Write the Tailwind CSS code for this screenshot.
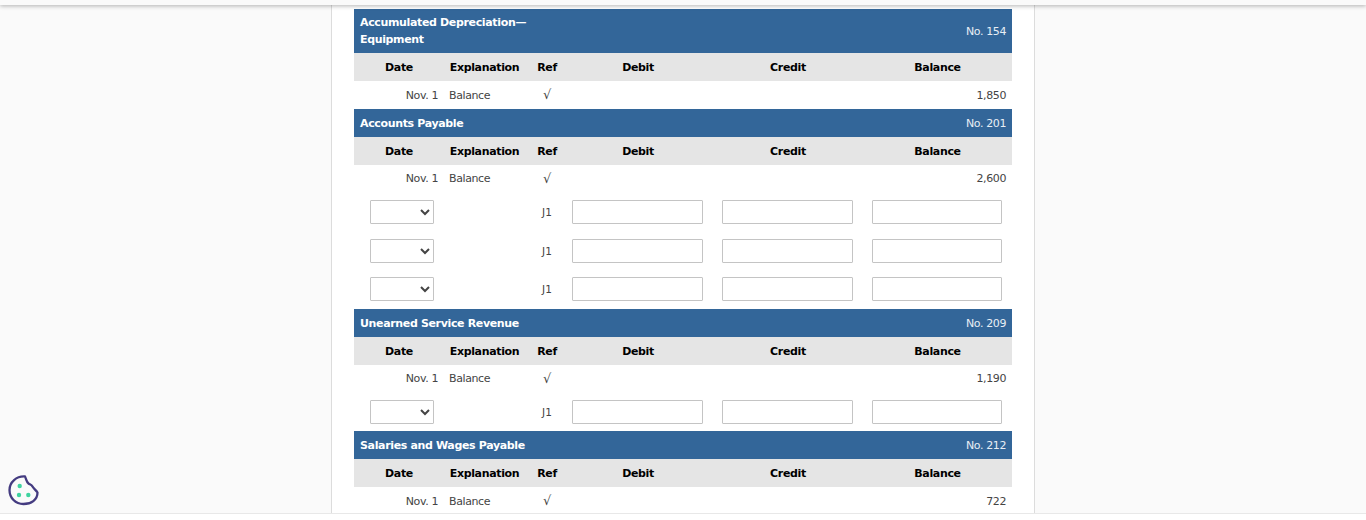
<!DOCTYPE html>
<html lang="en">
<head>
    <meta charset="UTF-8">
    <title>Ledger</title>
    <script src="https://cdn.jsdelivr.net/npm/@tailwindcss/browser@4"></script>
</head>
<body class="bg-white h-[520px] overflow-hidden font-['DejaVu_Sans',sans-serif] text-[11px] tracking-[-0.4px] text-[#444]">
    <!-- top bar -->
    <div class="relative z-10 h-[5px] bg-[#fafafa] shadow-[0_1px_4px_rgba(0,0,0,0.3)]"></div>

    <div class="h-[509px] bg-[#fafafa] border-b border-[#e8e8e8] overflow-hidden">
        <div class="w-[704px] h-full ml-[331px] bg-white border-x border-[#dcdcdc] pt-[4px] pl-[22px] overflow-hidden">
            <div class="w-[658px]">

                <!-- 154 -->
                <div class="h-[44px] px-[6px] flex items-center justify-between bg-[#336699] text-white">
                    <span class="font-bold tracking-[-0.35px] leading-[17px] w-[190px]">Accumulated Depreciation—Equipment</span>
                    <span class="mt-[3px] text-[#e8eef5]">No. 154</span>
                </div>
                <div class="grid grid-cols-[90px_87px_32px_150px_150px_149px] h-[28px] pt-[2px] items-center bg-[#e5e5e5] text-black font-bold tracking-[-0.35px] text-center">
                    <span>Date</span><span class="pr-[6px]">Explanation</span><span>Ref</span><span>Debit</span><span>Credit</span><span>Balance</span>
                </div>
                <div class="grid grid-cols-[90px_87px_32px_150px_150px_149px] h-[28px] pt-[2px] items-center">
                    <span class="text-right pr-[6px]">Nov. 1</span><span class="pl-[5px]">Balance</span><span class="mb-[2px] text-center text-[13px]">√</span><span></span><span></span><span class="text-right pr-[6px]">1,850</span>
                </div>

                <!-- 201 -->
                <div class="h-[28px] pt-[2px] px-[6px] flex items-center justify-between bg-[#336699] text-white">
                    <span class="font-bold tracking-[-0.35px]">Accounts Payable</span>
                    <span class="text-[#e8eef5]">No. 201</span>
                </div>
                <div class="grid grid-cols-[90px_87px_32px_150px_150px_149px] h-[28px] pt-[2px] items-center bg-[#e5e5e5] text-black font-bold tracking-[-0.35px] text-center">
                    <span>Date</span><span class="pr-[6px]">Explanation</span><span>Ref</span><span>Debit</span><span>Credit</span><span>Balance</span>
                </div>
                <div class="grid grid-cols-[90px_87px_32px_150px_150px_149px] h-[27px] pt-[2px] items-center">
                    <span class="text-right pr-[6px]">Nov. 1</span><span class="pl-[5px]">Balance</span><span class="mb-[2px] text-center text-[13px]">√</span><span></span><span></span><span class="text-right pr-[6px]">2,600</span>
                </div>
                <div class="grid grid-cols-[90px_87px_32px_150px_150px_149px] h-[40px] pt-[8px] items-start">
                    <select class="ml-[16px] w-[64px] h-[24px] bg-white border border-[#c4c4c4] rounded-[1px]"></select><span></span><span class="text-center text-[10.5px] tracking-normal leading-[24px]">J1</span>
                    <input type="text" class="ml-[9px] w-[131px] h-[24px] border border-[#c4c4c4] rounded-[1px]">
                    <input type="text" class="ml-[9px] w-[131px] h-[24px] border border-[#c4c4c4] rounded-[1px]">
                    <input type="text" class="ml-[9px] w-[130px] h-[24px] border border-[#c4c4c4] rounded-[1px]">
                </div>
                <div class="grid grid-cols-[90px_87px_32px_150px_150px_149px] h-[38px] pt-[7px] items-start">
                    <select class="ml-[16px] w-[64px] h-[24px] bg-white border border-[#c4c4c4] rounded-[1px]"></select><span></span><span class="text-center text-[10.5px] tracking-normal leading-[24px]">J1</span>
                    <input type="text" class="ml-[9px] w-[131px] h-[24px] border border-[#c4c4c4] rounded-[1px]">
                    <input type="text" class="ml-[9px] w-[131px] h-[24px] border border-[#c4c4c4] rounded-[1px]">
                    <input type="text" class="ml-[9px] w-[130px] h-[24px] border border-[#c4c4c4] rounded-[1px]">
                </div>
                <div class="grid grid-cols-[90px_87px_32px_150px_150px_149px] h-[39px] pt-[7px] items-start">
                    <select class="ml-[16px] w-[64px] h-[24px] bg-white border border-[#c4c4c4] rounded-[1px]"></select><span></span><span class="text-center text-[10.5px] tracking-normal leading-[24px]">J1</span>
                    <input type="text" class="ml-[9px] w-[131px] h-[24px] border border-[#c4c4c4] rounded-[1px]">
                    <input type="text" class="ml-[9px] w-[131px] h-[24px] border border-[#c4c4c4] rounded-[1px]">
                    <input type="text" class="ml-[9px] w-[130px] h-[24px] border border-[#c4c4c4] rounded-[1px]">
                </div>

                <!-- 209 -->
                <div class="h-[28px] pt-[2px] px-[6px] flex items-center justify-between bg-[#336699] text-white">
                    <span class="font-bold tracking-[-0.35px]">Unearned Service Revenue</span>
                    <span class="text-[#e8eef5]">No. 209</span>
                </div>
                <div class="grid grid-cols-[90px_87px_32px_150px_150px_149px] h-[28px] pt-[2px] items-center bg-[#e5e5e5] text-black font-bold tracking-[-0.35px] text-center">
                    <span>Date</span><span class="pr-[6px]">Explanation</span><span>Ref</span><span>Debit</span><span>Credit</span><span>Balance</span>
                </div>
                <div class="grid grid-cols-[90px_87px_32px_150px_150px_149px] h-[27px] pt-[2px] items-center">
                    <span class="text-right pr-[6px]">Nov. 1</span><span class="pl-[5px]">Balance</span><span class="mb-[2px] text-center text-[13px]">√</span><span></span><span></span><span class="text-right pr-[6px]">1,190</span>
                </div>
                <div class="grid grid-cols-[90px_87px_32px_150px_150px_149px] h-[39px] pt-[8px] items-start">
                    <select class="ml-[16px] w-[64px] h-[24px] bg-white border border-[#c4c4c4] rounded-[1px]"></select><span></span><span class="text-center text-[10.5px] tracking-normal leading-[24px]">J1</span>
                    <input type="text" class="ml-[9px] w-[131px] h-[24px] border border-[#c4c4c4] rounded-[1px]">
                    <input type="text" class="ml-[9px] w-[131px] h-[24px] border border-[#c4c4c4] rounded-[1px]">
                    <input type="text" class="ml-[9px] w-[130px] h-[24px] border border-[#c4c4c4] rounded-[1px]">
                </div>

                <!-- 212 -->
                <div class="h-[28px] pt-[2px] px-[6px] flex items-center justify-between bg-[#336699] text-white">
                    <span class="font-bold tracking-[-0.35px]">Salaries and Wages Payable</span>
                    <span class="text-[#e8eef5]">No. 212</span>
                </div>
                <div class="grid grid-cols-[90px_87px_32px_150px_150px_149px] h-[28px] pt-[2px] items-center bg-[#e5e5e5] text-black font-bold tracking-[-0.35px] text-center">
                    <span>Date</span><span class="pr-[6px]">Explanation</span><span>Ref</span><span>Debit</span><span>Credit</span><span>Balance</span>
                </div>
                <div class="grid grid-cols-[90px_87px_32px_150px_150px_149px] h-[28px] pt-[2px] items-center">
                    <span class="text-right pr-[6px]">Nov. 1</span><span class="pl-[5px]">Balance</span><span class="mb-[2px] text-center text-[13px]">√</span><span></span><span></span><span class="text-right pr-[6px]">722</span>
                </div>
            </div>
        </div>
    </div>

    <!-- cookie button -->
    <svg class="absolute left-[8px] top-[475px]" width="31" height="31" viewBox="0 0 31 31" fill="none">
        <path d="M17 1.5C18.5 4.5 18.5 7 20.5 8.5C22 9.5 23.5 9.5 24.5 11.5C25.5 13.5 28 15 29.5 17.5C29.5 25 23 29 15.5 29C7.5 29 1.5 23 1.5 15C1.5 7 8.5 1 17 1.5Z" stroke="#443b80" stroke-width="2.3" stroke-linejoin="round"/>
        <circle cx="11.7" cy="11" r="2.2" fill="#3fd3a0"/>
        <circle cx="11" cy="20" r="2.2" fill="#3fd3a0"/>
        <circle cx="20.3" cy="20" r="2.2" fill="#3fd3a0"/>
    </svg>
</body>
</html>
